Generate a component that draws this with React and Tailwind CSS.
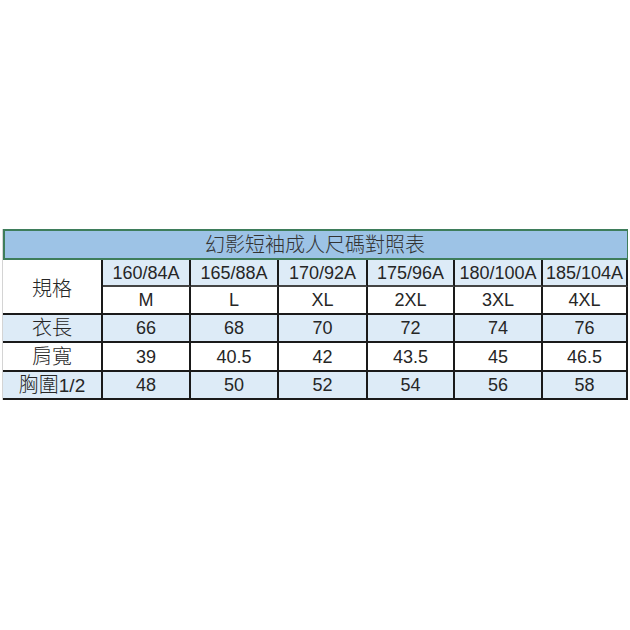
import React from 'react'

const sizes = [
  { spec: '160/84A', size: 'M', len: '66', shoulder: '39', chest: '48' },
  { spec: '165/88A', size: 'L', len: '68', shoulder: '40.5', chest: '50' },
  { spec: '170/92A', size: 'XL', len: '70', shoulder: '42', chest: '52' },
  { spec: '175/96A', size: '2XL', len: '72', shoulder: '43.5', chest: '54' },
  { spec: '180/100A', size: '3XL', len: '74', shoulder: '45', chest: '56' },
  { spec: '185/104A', size: '4XL', len: '76', shoulder: '46.5', chest: '58' },
]

const cell = 'flex items-center justify-center border-r-2 border-b-2 border-[#1a1a1a] text-[18px] leading-none'
const label = 'flex items-center justify-center border-r-2 border-b-2 border-[#1a1a1a] text-[20px] leading-none font-light'

export default function App() {
  return (
    <div
      className="w-[630px] h-[630px] bg-white text-[#262626] pt-[229px] pl-[2px]"
      style={{ fontFamily: '"Liberation Sans", "Noto Sans CJK TC", sans-serif' }}
    >
      <div className="grid w-[625px] grid-cols-[100px_88px_88px_89px_87px_88px_85px] grid-rows-[31px_27px_28px_28px_29px_28px] border-l border-[#d4d4d4]">
        <div className="col-span-7 flex items-center justify-center bg-[#9dc3e6] border-t-2 border-b-2 border-l-2 border-r border-[#3e7d5b] text-[20px] font-light text-[#333] pr-[2px]">
          幻影短袖成人尺碼對照表
        </div>

        <div className={`${label} row-span-2 bg-white pt-[4px]`}>規格</div>
        {sizes.map(s => (
          <div key={s.spec} className={`${cell} bg-[#ddebf7] border-b border-b-[#444]`}>{s.spec}</div>
        ))}
        {sizes.map(s => (
          <div key={s.size} className={`${cell} bg-white`}>{s.size}</div>
        ))}

        <div className={`${label} bg-[#ddebf7]`}>衣長</div>
        {sizes.map(s => (
          <div key={s.spec + 'l'} className={`${cell} bg-[#ddebf7]`}>{s.len}</div>
        ))}

        <div className={`${label} bg-white`}>肩寬</div>
        {sizes.map(s => (
          <div key={s.spec + 's'} className={`${cell} bg-white`}>{s.shoulder}</div>
        ))}

        <div className={`${label} bg-[#ddebf7]`}>胸圍<span className="text-[19px]">1/2</span></div>
        {sizes.map(s => (
          <div key={s.spec + 'c'} className={`${cell} bg-[#ddebf7]`}>{s.chest}</div>
        ))}
      </div>
    </div>
  )
}
